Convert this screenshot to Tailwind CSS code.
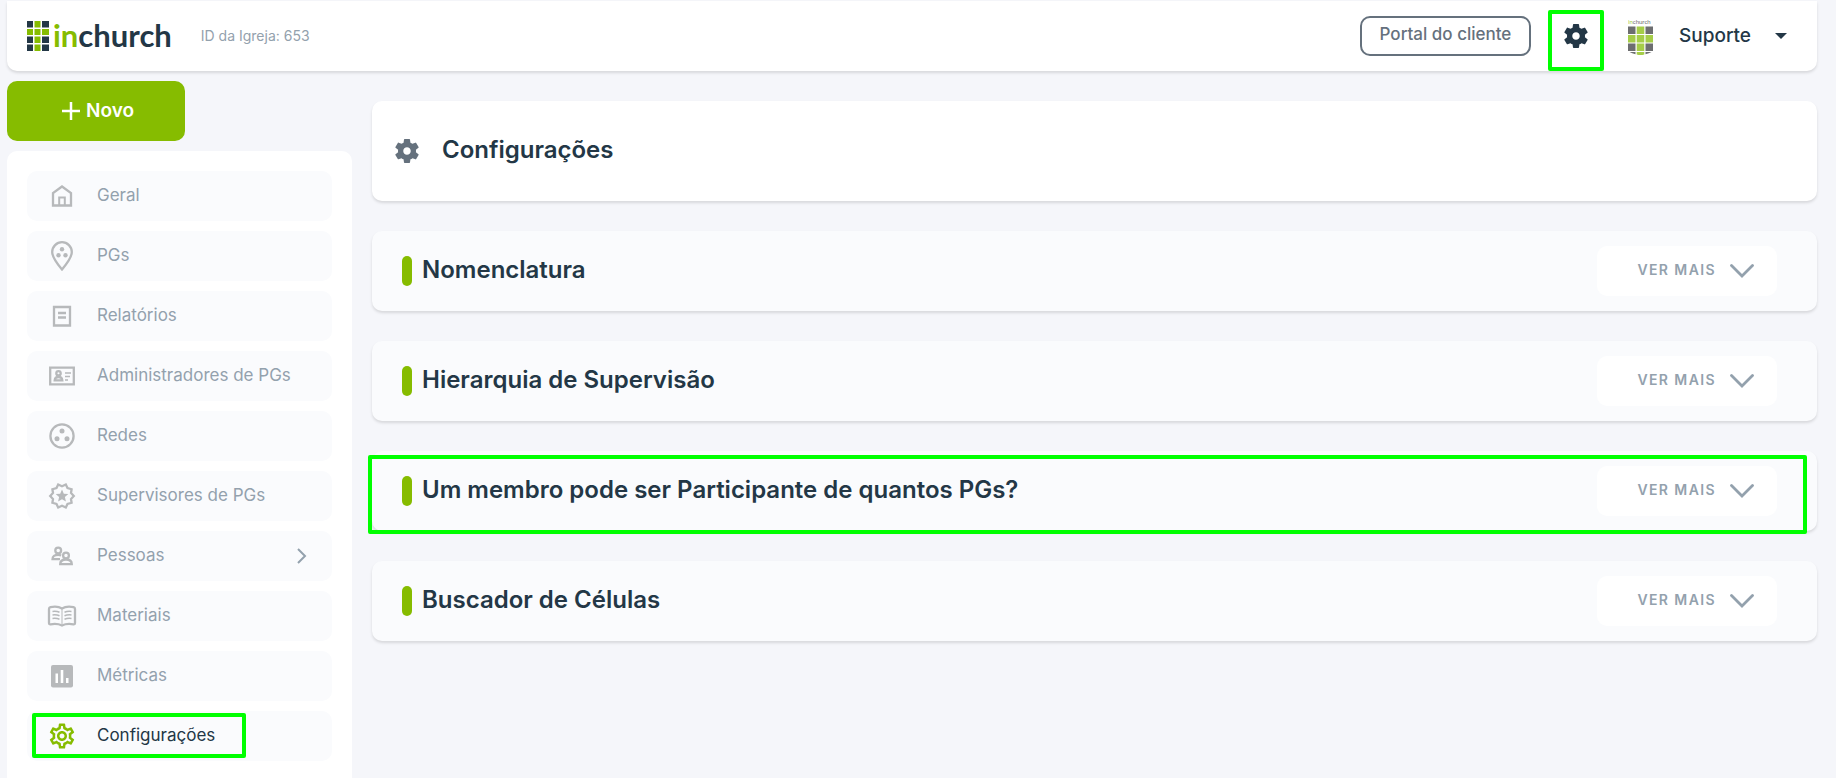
<!DOCTYPE html>
<html lang="pt-BR">
<head>
  <meta charset="UTF-8">
  <meta name="viewport" content="width=device-width, initial-scale=1.0">
  <title>inChurch - Configurações</title>
  <script src="https://cdn.jsdelivr.net/npm/@tailwindcss/browser@4"></script>
</head>
<body class="min-h-screen bg-[#f5f6fa] pl-[7px] pr-[19px] pt-px font-['Inter',sans-serif] text-[#233746] overflow-x-hidden">

  <!-- shared icons -->
  <svg class="hidden">
    <symbol id="gear" viewBox="0 0 24 24">
      <path d="M19.14 12.94c.04-.3.06-.61.06-.94 0-.32-.02-.64-.07-.94l2.03-1.58a.49.49 0 0 0 .12-.61l-1.92-3.32a.488.488 0 0 0-.59-.22l-2.39.96c-.5-.38-1.03-.7-1.62-.94l-.36-2.54a.484.484 0 0 0-.48-.41h-3.84c-.24 0-.43.17-.47.41l-.36 2.54c-.59.24-1.13.57-1.62.94l-2.39-.96c-.22-.08-.47 0-.59.22L2.74 8.87c-.12.21-.08.47.12.61l2.03 1.58c-.05.3-.09.63-.09.94s.02.64.07.94l-2.03 1.58a.49.49 0 0 0-.12.61l1.92 3.32c.12.22.37.29.59.22l2.39-.96c.5.38 1.03.7 1.62.94l.36 2.54c.05.24.24.41.48.41h3.84c.24 0 .44-.17.47-.41l.36-2.54c.59-.24 1.13-.56 1.62-.94l2.39.96c.22.08.47 0 .59-.22l1.92-3.32c.12-.22.07-.47-.12-.61l-2.01-1.58zM12 15c-1.660 0-3-1.340-3-3s1.340-3 3-3 3 1.340 3 3-1.340 3-3 3z" fill="currentColor"/>
    </symbol>
    <symbol id="chevron" viewBox="0 0 24 14">
      <path d="M1.500 1.500 12 12 22.500 1.500" fill="none" stroke="currentColor" stroke-width="2.800" stroke-linecap="round"/>
    </symbol>
  </svg>

  <header class="flex h-[70px] items-center justify-between rounded-b-[10px] bg-white pl-5 pr-[30px] shadow-[0_2px_3px_rgba(0,0,0,0.12)]">
    <div class="flex items-center gap-[29px]">
      <a href="#" class="flex items-center gap-1" aria-label="inchurch">
        <svg class="h-[30px] w-[22px]" viewBox="0 0 22 30">
          <path fill="#233746" d="M0 0h6v6.500H0zM15 0h7v6.500h-7zM0 15.500h6V22H0zM15 15.500h7V22h-7zM0 23.500h6V30H0zM15 23.500h7V30h-7z"/>
          <path fill="#86bc00" d="M7.500 0h6v6.500h-6zM0 8h6v6H0zM7.500 8h6v6h-6zM15 8h7v6h-7zM7.500 15.500h6V22h-6zM7.500 23.500h6V30h-6z"/>
        </svg>
        <span class="pb-[2px] font-['Lato',sans-serif] text-[31px] leading-[30px] font-bold"><span class="text-[#86bc00]">in</span>church</span>
      </a>
      <span class="text-sm text-[#93a1ad]">ID da Igreja: 653</span>
    </div>

    <div class="flex items-center">
      <a href="#" class="flex h-10 w-[171px] items-center justify-center rounded-[10px] border-2 border-[#65717d] pb-[2px] text-[17px] font-medium text-[#65717d]">Portal do cliente</a>
      <button class="relative ml-[30px] flex h-10 w-[30px] items-center justify-center" aria-label="Configurações">
        <svg class="h-[30px] w-[30px]"><use href="#gear"/></svg>
        <span class="absolute -inset-x-[13px] -top-[6px] -bottom-[15px] rounded-xs border-4 border-[#00ff00]"></span>
      </button>
      <button class="ml-[37px] flex items-center">
        <svg class="h-10 w-[25px]" viewBox="0 0 25 40">
          <text x="0" y="8" font-size="6" font-family="Lato" fill="#6b6d6f"><tspan fill="#a5cd39">in</tspan>church</text>
          <g transform="translate(0 3)">
            <path fill="#6d6e70" d="M0 7.500h7.500V15H0zM17.500 7.500H25V15h-7.500zM0 24.500h7.500V32H0zM17.500 24.500H25V32h-7.500zM1.500 33h6v2.200Q4 34.500 1.500 33zM17.500 33h6q-2.500 1.500-6 2.200z"/>
            <path fill="#a5cd48" d="M8.700 7.500h7.600V15H8.700zM0 16h7.500v7.500H0zM8.700 16h7.600v7.500H8.700zM17.500 16H25v7.500h-7.500zM8.700 24.500h7.600V32H8.700zM8.700 33h7.600v2.500q-3.800 1-7.600 0z"/>
          </g>
        </svg>
        <span class="ml-[26px] text-[19px] font-medium">Suporte</span>
        <svg class="ml-6 h-[6px] w-3" viewBox="0 0 12 6"><path d="M0 0h12L6 6z" fill="currentColor"/></svg>
      </button>
    </div>
  </header>

  <div class="mt-[10px] flex gap-5">
    <aside class="w-[345px] shrink-0">
      <button class="flex h-[60px] w-[178px] items-center justify-center gap-[6px] rounded-[10px] bg-[#86bc00] pl-1 text-[19px] font-semibold text-white">
        <svg class="h-[18px] w-[18px]" viewBox="0 0 18 18"><path d="M9 0v18M0 9h18" stroke="currentColor" stroke-width="2.500"/></svg>
        Novo
      </button>

      <nav class="mt-[10px] h-[627px] rounded-t-[10px] bg-white px-5 pt-5">
        <ul class="flex flex-col gap-[10px] text-[17px] text-[#93a1ad]">
          <li>
            <a href="#" class="flex h-[50px] items-center gap-5 rounded-[10px] bg-[#fafbfd] pl-5">
              <svg class="h-[30px] w-[30px] text-[#b7b9bb]" viewBox="0 0 30 30" fill="none" stroke="currentColor" stroke-width="2.300">
                <path d="M6 24.500V12l9-6.500 9 6.500v12.500z"/><path d="M12.200 24v-7.500h5.600V24" stroke-width="2"/>
              </svg>
              Geral
            </a>
          </li>
          <li>
            <a href="#" class="flex h-[50px] items-center gap-5 rounded-[10px] bg-[#fafbfd] pl-5">
              <svg class="h-[30px] w-[30px] text-[#b7b9bb]" viewBox="0 0 30 30" fill="none" stroke="currentColor" stroke-width="2.300">
                <path d="M15 28.500C9.500 22 5.200 16.500 5.200 11a9.800 9.800 0 0 1 19.600 0c0 5.500-4.300 11-9.800 17.500z"/>
                <g fill="currentColor" stroke="none"><circle cx="15" cy="8.300" r="2.200"/><circle cx="11.500" cy="14.300" r="2.200"/><circle cx="18.500" cy="14.300" r="2.200"/></g>
              </svg>
              PGs
            </a>
          </li>
          <li>
            <a href="#" class="flex h-[50px] items-center gap-5 rounded-[10px] bg-[#fafbfd] pl-5">
              <svg class="h-[30px] w-[30px] text-[#b7b9bb]" viewBox="0 0 30 30" fill="none" stroke="currentColor" stroke-width="2.300">
                <path d="M7 6h16v18.500H7zM11 12h8M11 16.500h8"/>
              </svg>
              Relatórios
            </a>
          </li>
          <li>
            <a href="#" class="flex h-[50px] items-center gap-5 rounded-[10px] bg-[#fafbfd] pl-5">
              <svg class="h-[30px] w-[30px] text-[#b7b9bb]" viewBox="0 0 30 30" fill="none" stroke="currentColor" stroke-width="2.300">
                <path d="M3.200 6.700h23.600v16.600H3.200z"/>
                <circle cx="11.500" cy="12.300" r="2.200"/><path d="M7.700 19.300c.2-2.600 1.800-3.300 3.800-3.300s3.600.7 3.800 3.300z"/>
                <path d="M18 12h6M18 15.500h5M18 19h3" stroke-width="1.700"/>
              </svg>
              Administradores de PGs
            </a>
          </li>
          <li>
            <a href="#" class="flex h-[50px] items-center gap-5 rounded-[10px] bg-[#fafbfd] pl-5">
              <svg class="h-[30px] w-[30px] text-[#b7b9bb]" viewBox="0 0 30 30" fill="none" stroke="currentColor" stroke-width="2.300">
                <circle cx="15" cy="15" r="11.600"/>
                <g fill="currentColor" stroke="none"><circle cx="15" cy="10" r="2.500"/><circle cx="10" cy="17.700" r="2.500"/><circle cx="20" cy="17.700" r="2.500"/></g>
              </svg>
              Redes
            </a>
          </li>
          <li>
            <a href="#" class="flex h-[50px] items-center gap-5 rounded-[10px] bg-[#fafbfd] pl-5">
              <svg class="h-[30px] w-[30px] text-[#b7b9bb]" viewBox="0 0 30 30" fill="none" stroke="currentColor" stroke-width="2.300">
                <path d="M15 5.200 18.800 3.500 20.500 7 24.600 8.200 24 12 26.800 15 24 18 24.600 21.800 20.500 23 18.800 26.500 15 24.800 11.200 26.500 9.500 23 5.400 21.800 6 18 3.200 15 6 12 5.400 8.200 9.500 7 11.200 3.500z"/>
                <path d="m15 8.500 1.800 4.200 4.500.4-3.400 3 1 4.400-3.900-2.300-3.900 2.300 1-4.400-3.400-3 4.500-.4z" fill="currentColor" stroke="none"/>
              </svg>
              Supervisores de PGs
            </a>
          </li>
          <li>
            <a href="#" class="flex h-[50px] items-center gap-5 rounded-[10px] bg-[#fafbfd] pl-5 pr-[25px]">
              <svg class="h-[30px] w-[30px] text-[#b7b9bb]" viewBox="0 0 30 30" fill="none" stroke="currentColor" stroke-width="2.300">
                <circle cx="11.200" cy="9.500" r="2.900"/><path d="M13 18.200H5.500c0-3 2-4.300 5.700-4.300 1.200 0 2.200.2 3 .6"/>
                <circle cx="19" cy="14.500" r="2.900"/><path d="M13.200 23.200c0-3.300 2-4.700 5.800-4.700s5.800 1.400 5.800 4.700z"/>
              </svg>
              <span class="flex-1">Pessoas</span>
              <svg class="h-4 w-[10px]" viewBox="0 0 10 16"><path d="m1 1 7 7-7 7" fill="none" stroke="currentColor" stroke-width="2"/></svg>
            </a>
          </li>
          <li>
            <a href="#" class="flex h-[50px] items-center gap-5 rounded-[10px] bg-[#fafbfd] pl-5">
              <svg class="h-[30px] w-[30px] text-[#b7b9bb]" viewBox="0 0 30 30" fill="none" stroke="currentColor" stroke-width="2.300">
                <path d="M15 7.500C12 5.700 7 5.500 3.500 6.200 2.500 6.500 2 7 2 8v14c0 1 .7 1.500 1.600 1.300C8 22.600 12 23 15 24.500c3-1.500 7-1.900 11.400-1.200.9.200 1.600-.3 1.600-1.300V8c0-1-.5-1.500-1.500-1.800C23 5.500 18 5.700 15 7.500z"/>
                <path d="M15 8v15" stroke-width="1"/>
                <path d="M5.500 10.500q4-.5 7 .8M5.500 14q4-.5 7 .8M5.500 17.500q4-.5 7 .8M24.500 10.500q-4-.5-7 .8M24.500 14q-4-.5-7 .8M24.500 17.500q-4-.5-7 .8" stroke-width="1.500"/>
              </svg>
              Materiais
            </a>
          </li>
          <li>
            <a href="#" class="flex h-[50px] items-center gap-5 rounded-[10px] bg-[#fafbfd] pl-5">
              <svg class="h-[30px] w-[30px] text-[#b7b9bb]" viewBox="0 0 30 30">
                <rect x="4" y="4" width="22" height="22.500" rx="2" fill="currentColor"/>
                <path d="M8.500 12.500H11V22H8.500zM13.700 9h2.600v13h-2.600zM19 17h2.500v5H19z" fill="#fff"/>
              </svg>
              Métricas
            </a>
          </li>
          <li class="relative">
            <a href="#" class="flex h-[50px] items-center gap-5 rounded-[10px] bg-[#fafbfd] pl-5 text-[#233746]">
              <svg class="h-[30px] w-[30px] text-[#86bc00]" viewBox="0 0 24 24">
                <path d="M19.430 12.980c.04-.32.07-.64.07-.98 0-.34-.03-.66-.07-.98l2.110-1.650c.19-.15.24-.42.12-.64l-2-3.460c-.09-.16-.26-.25-.44-.25-.06 0-.12.010-.17.030l-2.490 1c-.52-.4-1.080-.73-1.690-.98l-.38-2.650C14.460 2.180 14.250 2 14 2h-4c-.25 0-.46.18-.49.42l-.38 2.650c-.61.25-1.170.59-1.690.98l-2.490-1c-.06-.02-.12-.03-.18-.03-.17 0-.34.09-.43.25l-2 3.460c-.13.22-.07.49.12.64l2.110 1.650c-.04.32-.07.65-.07.98 0 .33.030.66.070.98l-2.110 1.650c-.19.15-.24.42-.12.64l2 3.460c.09.16.26.25.44.25.06 0 .12-.01.17-.03l2.490-1c.52.4 1.080.73 1.690.98l.38 2.650c.03.24.24.42.49.42h4c.25 0 .46-.18.49-.42l.38-2.650c.61-.25 1.170-.59 1.690-.98l2.490 1c.06.02.12.03.18.03.17 0 .34-.09.43-.25l2-3.460c.12-.22.07-.49-.12-.64l-2.110-1.650zm-1.980-1.710c.04.31.05.52.05.73 0 .21-.02.43-.05.73l-.14 1.130.89.7 1.080.84-.7 1.210-1.270-.51-1.040-.42-.9.680c-.43.32-.84.56-1.250.73l-1.060.43-.16 1.130-.2 1.350h-1.400l-.19-1.350-.16-1.130-1.060-.43c-.43-.18-.83-.41-1.230-.71l-.91-.7-1.060.43-1.270.51-.7-1.210 1.080-.84.89-.7-.14-1.130c-.03-.31-.05-.54-.05-.74s.02-.43.05-.73l.14-1.130-.89-.7-1.080-.84.7-1.210 1.270.51 1.040.42.9-.68c.43-.32.84-.56 1.250-.73l1.060-.43.16-1.130.2-1.350h1.390l.19 1.350.16 1.130 1.060.43c.43.18.83.41 1.230.71l.91.7 1.060-.43 1.270-.51.7 1.210-1.070.85-.89.7.14 1.130zM12 8c-2.210 0-4 1.790-4 4s1.790 4 4 4 4-1.790 4-4-1.790-4-4-4zm0 6c-1.100 0-2-.9-2-2s.9-2 2-2 2 .9 2 2-.9 2-2 2z" fill="currentColor"/>
              </svg>
              Configurações
            </a>
            <span class="pointer-events-none absolute left-[5px] top-[2px] h-[45px] w-[214px] rounded-xs border-4 border-[#00ff00]"></span>
          </li>
        </ul>
      </nav>
    </aside>

    <main class="mt-5 flex min-w-0 flex-1 flex-col gap-[30px]">
      <div class="flex h-[100px] items-center gap-5 rounded-[10px] bg-white pl-5 shadow-[0_2px_3px_rgba(0,0,0,0.12)]">
        <svg class="h-[30px] w-[30px] text-[#65717d]"><use href="#gear"/></svg>
        <h1 class="pb-[2px] text-2xl font-semibold">Configurações</h1>
      </div>

      <section class="flex h-20 items-center justify-between rounded-[10px] bg-[#fafbfd] pl-[30px] pr-10 shadow-[0_2px_3px_rgba(0,0,0,0.12)]">
        <div class="flex items-center gap-[10px]">
          <span class="h-[30px] w-[10px] rounded-full bg-[#86bc00]"></span>
          <h2 class="pb-[2px] text-2xl font-semibold">Nomenclatura</h2>
        </div>
        <button class="flex h-[50px] w-[180px] items-center justify-end gap-[14px] rounded-[10px] bg-white pr-[23px] text-sm font-semibold tracking-widest text-[#93a1ad]">
          <span class="pb-[2px]">VER MAIS</span>
          <svg class="h-[14px] w-6"><use href="#chevron"/></svg>
        </button>
      </section>

      <section class="flex h-20 items-center justify-between rounded-[10px] bg-[#fafbfd] pl-[30px] pr-10 shadow-[0_2px_3px_rgba(0,0,0,0.12)]">
        <div class="flex items-center gap-[10px]">
          <span class="h-[30px] w-[10px] rounded-full bg-[#86bc00]"></span>
          <h2 class="pb-[2px] text-2xl font-semibold">Hierarquia de Supervisão</h2>
        </div>
        <button class="flex h-[50px] w-[180px] items-center justify-end gap-[14px] rounded-[10px] bg-white pr-[23px] text-sm font-semibold tracking-widest text-[#93a1ad]">
          <span class="pb-[2px]">VER MAIS</span>
          <svg class="h-[14px] w-6"><use href="#chevron"/></svg>
        </button>
      </section>

      <section class="relative flex h-20 items-center justify-between rounded-[10px] bg-[#fafbfd] pl-[30px] pr-10 shadow-[0_2px_3px_rgba(0,0,0,0.12)]">
        <div class="flex items-center gap-[10px]">
          <span class="h-[30px] w-[10px] rounded-full bg-[#86bc00]"></span>
          <h2 class="pb-[2px] text-2xl font-semibold">Um membro pode ser Participante de quantos PGs?</h2>
        </div>
        <button class="flex h-[50px] w-[180px] items-center justify-end gap-[14px] rounded-[10px] bg-white pr-[23px] text-sm font-semibold tracking-widest text-[#93a1ad]">
          <span class="pb-[2px]">VER MAIS</span>
          <svg class="h-[14px] w-6"><use href="#chevron"/></svg>
        </button>
        <span class="pointer-events-none absolute top-1 right-[10px] -bottom-[3px] -left-1 rounded-xs border-4 border-[#00ff00]"></span>
      </section>

      <section class="flex h-20 items-center justify-between rounded-[10px] bg-[#fafbfd] pl-[30px] pr-10 shadow-[0_2px_3px_rgba(0,0,0,0.12)]">
        <div class="flex items-center gap-[10px]">
          <span class="h-[30px] w-[10px] rounded-full bg-[#86bc00]"></span>
          <h2 class="pb-[2px] text-2xl font-semibold">Buscador de Células</h2>
        </div>
        <button class="flex h-[50px] w-[180px] items-center justify-end gap-[14px] rounded-[10px] bg-white pr-[23px] text-sm font-semibold tracking-widest text-[#93a1ad]">
          <span class="pb-[2px]">VER MAIS</span>
          <svg class="h-[14px] w-6"><use href="#chevron"/></svg>
        </button>
      </section>
    </main>
  </div>

</body>
</html>
